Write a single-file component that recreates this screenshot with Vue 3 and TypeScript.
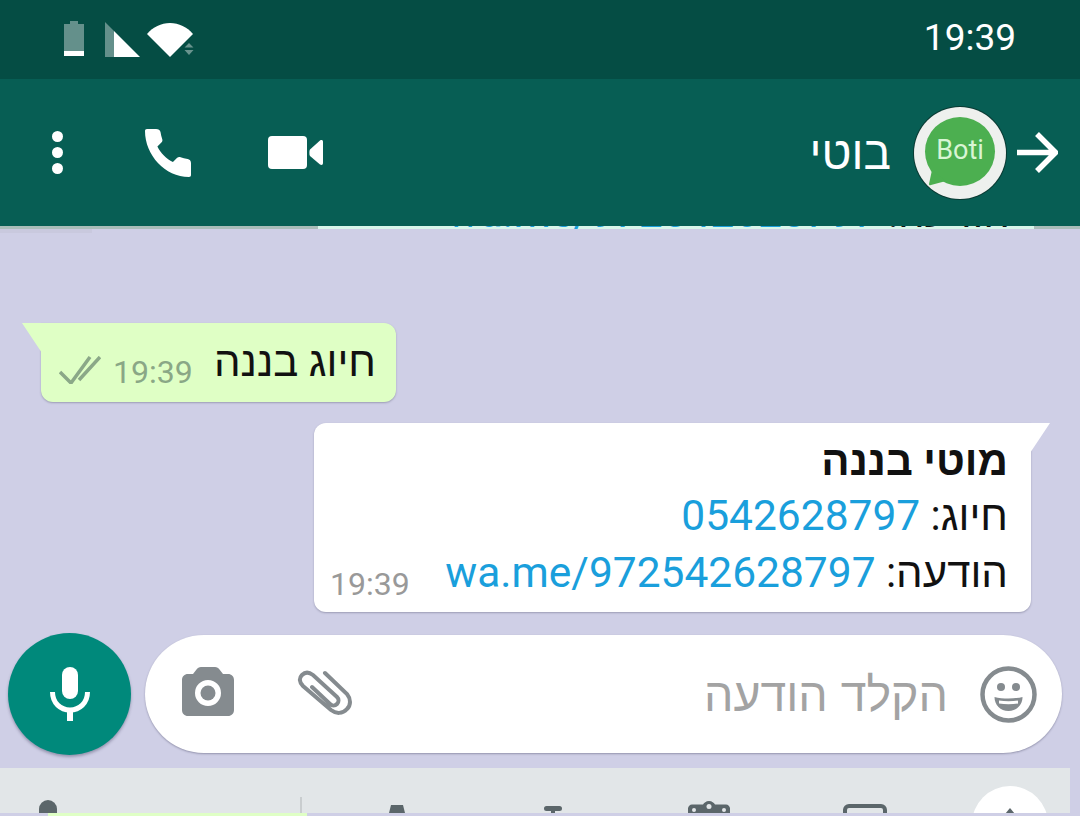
<template>
  <div class="screen">
    <header class="status-bar">
      <div class="status-icons">
        <svg class="battery" width="20" height="35" viewBox="0 0 20 35">
          <path d="M6 0h8v3h6v32H0V3h6z" fill="#fff" fill-opacity=".38" />
          <rect y="30" width="20" height="5" fill="#fff" />
        </svg>
        <svg class="signal" width="35" height="35" viewBox="0 0 35 35">
          <path d="M0 0l9 9v26H0z" fill="#fff" fill-opacity=".38" />
          <path d="M9 9l26 26H9z" fill="#fff" />
        </svg>
        <svg class="wifi" width="48" height="36" viewBox="0 0 48 36">
          <path d="M0 12C6 5 14 1 23 1s17 4 23 11L23 35z" fill="#fff" />
          <path d="M42 21l4.500 4.500h-9zM37.500 28h9L42 33z" fill="#fff" fill-opacity=".4" />
        </svg>
      </div>
      <span class="clock">19:39</span>
    </header>

    <div class="app-bar">
      <div class="actions">
        <svg class="dots" width="11" height="43" viewBox="0 0 11 43">
          <circle cx="5.500" cy="5.500" r="5.500" fill="#fff" />
          <circle cx="5.500" cy="21.500" r="5.500" fill="#fff" />
          <circle cx="5.500" cy="37.500" r="5.500" fill="#fff" />
        </svg>
        <svg class="phone" width="48" height="48" viewBox="0 0 48 48">
          <path d="M2 0h9c2.500 0 4 1 4.500 3 .4 2.500 1 5 1.700 7 .5 1.500.2 2.600-.8 3.600l-4 4c3.200 6.500 9 12.400 15.500 15.500l4-4c1-1 2.300-1.400 3.700-.9 2 .7 4.400 1.300 7 1.700 2 .4 3.400 1.700 3.400 4V46c0 1.300-.7 2-2 2C20 48 0 26 0 2c0-1.300.7-2 2-2z" fill="#fff" />
        </svg>
        <svg class="video" width="55" height="33" viewBox="0 0 55 33">
          <rect width="39" height="33" rx="4" fill="#fff" />
          <path d="M42 13.500L52 4.500c1.500-1 3-.5 3 1.500v21c0 2-1.500 2.500-3 1.500L42 20c-.8-.8-.8-5.700 0-6.500z" fill="#fff" />
        </svg>
      </div>
      <div class="contact">
        <span class="contact-name" dir="rtl">בוטי</span>
        <div class="avatar">
          <div class="avatar-bubble">Boti</div>
          <svg class="avatar-tail" width="18" height="16" viewBox="0 0 18 16">
            <path d="M3 0L0 14 Q0 16 2 15 L17 11z" fill="#4caf50" />
          </svg>
        </div>
        <svg class="back" width="41" height="41" viewBox="0 0 41 41">
          <path d="M0 20.500h38M20 2l18.500 18.500L20 39" fill="none" stroke="#fff" stroke-width="5.500" />
        </svg>
      </div>
    </div>

    <main class="chat">
      <div class="scrolled-bubble" dir="rtl">
        <div class="scrolled-line">הודעה: <span class="link">wa.me/972542628797</span></div>
      </div>

      <div class="bubble outgoing">
        <span class="ticks-wrap">
          <svg width="42" height="28" viewBox="0 0 42 28">
            <path d="M1 16l11 11L31 1M20 24L41 1" fill="none" stroke="#8ba888" stroke-width="3.500" />
          </svg>
          <span class="time">19:39</span>
        </span>
        <span class="message" dir="rtl">{{ outgoingText }}</span>
      </div>

      <div class="bubble incoming">
        <div class="sender" dir="rtl">מוטי בננה</div>
        <div class="line" dir="rtl">חיוג: <span class="link">0542628797</span></div>
        <div class="last-row">
          <span class="time grey">19:39</span>
          <div class="line" dir="rtl">הודעה: <span class="link">wa.me/972542628797</span></div>
        </div>
      </div>

      <div class="composer">
        <button class="mic-btn">
          <svg width="40" height="54" viewBox="0 0 40 54">
            <rect x="12" y="0" width="16" height="32" rx="8" fill="#fff" />
            <path d="M2.500 25c0 11 8 18 17.500 18s17.500-7 17.500-18" fill="none" stroke="#fff" stroke-width="5" />
            <rect x="17" y="42" width="6" height="12" fill="#fff" />
          </svg>
        </button>
        <div class="input-pill">
          <svg class="camera" width="52" height="49" viewBox="0 0 52 49">
            <path fill-rule="evenodd" d="M19 0h14c2 0 3.500 1 4.500 2.500L41 7h5c3.500 0 6 2.500 6 6v30c0 3.500-2.500 6-6 6H6c-3.500 0-6-2.500-6-6V13c0-3.500 2.500-6 6-6h5l3.500-4.500C15.500 1 17 0 19 0zM26 13a13 13 0 1 0 0 26 13 13 0 0 0 0-26z" fill="#858b8f" />
            <circle cx="26" cy="26" r="7.500" fill="#858b8f" />
          </svg>
          <svg class="clip" width="55" height="49" viewBox="0 0 55 49">
            <path d="M28 3L50 24c4 5 4 11 0 15-4.500 5-11 5-16 1L6 16C2 12 2 8 5 5c3-3 7-3 11 0l24 22c2 2 2 5 0 7s-5 2-7 0L15 17" fill="none" stroke="#858b8f" stroke-width="4" stroke-linecap="round" />
          </svg>
          <span class="placeholder" dir="rtl">הקלד הודעה</span>
          <svg class="emoji" width="57" height="57" viewBox="0 0 57 57">
            <circle cx="28.500" cy="28.500" r="26" fill="none" stroke="#858b8f" stroke-width="4.500" />
            <circle cx="21" cy="21" r="4" fill="#858b8f" />
            <circle cx="36" cy="21" r="4" fill="#858b8f" />
            <path d="M14.500 31c8 2 20 2 28 0 0 8-6 14-14 14s-14-6-14-14zM19 34.500c6 1 13 1 19 0v3c-6 1-13 1-19 0z" fill="#858b8f" fill-rule="evenodd" />
          </svg>
        </div>
      </div>
    </main>

    <div class="keyboard-row">
      <div class="keyboard">
        <div class="key key-mic"><span class="mic-top"></span></div>
        <span class="key-divider"></span>
        <div class="key key-sticker">
          <svg width="32" height="10" viewBox="0 0 32 10">
            <path d="M10 0h12l2 8h6l2 2H0l2-2h6z" fill="#5b666a" />
          </svg>
        </div>
        <div class="key key-text">
          <svg width="18" height="10" viewBox="0 0 18 10">
            <path d="M2.500 0h13a2.500 2.500 0 0 1 0 5H11v5H7V5H2.500a2.500 2.500 0 0 1 0-5z" fill="#5b666a" />
          </svg>
        </div>
        <div class="key key-clip">
          <svg width="42" height="14" viewBox="0 0 42 14">
            <path d="M21 0c3 0 5 2 6 3.500h11c2 0 4 2 4 4V14H0V7.500c0-2 2-4 4-4h11C16 2 18 0 21 0z" fill="#5b666a" />
            <circle cx="21" cy="5.500" r="2.500" fill="#e2e6e8" />
            <circle cx="6" cy="9" r="2" fill="#e2e6e8" />
            <circle cx="36" cy="9" r="2" fill="#e2e6e8" />
          </svg>
        </div>
        <div class="key key-board"><span class="board-top"></span></div>
        <div class="key-circle"><span class="caret"></span></div>
      </div>
    </div>
    <div class="page-edge"><span class="edge-green"></span></div>
  </div>
</template>

<script setup lang="ts">
const outgoingText = 'חיוג בננה'
</script>

<style>
html,
body {
  margin: 0;
  background: #cfcfe6;
}
</style>

<style scoped>
.screen {
  width: 1080px;
  height: 816px;
  display: flex;
  flex-direction: column;
  overflow: hidden;
  background: #cfcfe6;
  font-family: Roboto, "Liberation Sans", sans-serif;
}

.status-bar {
  height: 79px;
  flex: none;
  background: #054d44;
  display: flex;
  align-items: flex-start;
  justify-content: space-between;
  color: #fff;
}

.status-icons {
  display: flex;
  align-items: flex-start;
  padding: 21px 0 0 64px;
}

.signal {
  margin: 1px 0 0 21px;
}

.wifi {
  margin: 1px 0 0 7px;
}

.clock {
  font-size: 37px;
  line-height: 42px;
  margin: 17px 64px 0 0;
}

.app-bar {
  height: 147px;
  flex: none;
  background: #075e54;
  display: flex;
  align-items: center;
  justify-content: space-between;
  color: #fff;
}

.actions {
  display: flex;
  align-items: center;
  padding-left: 52px;
}

.phone {
  margin-left: 82px;
}

.video {
  margin-left: 75px;
}

.contact {
  display: flex;
  align-items: center;
  padding-right: 22px;
}

.contact-name {
  font-size: 46px;
  line-height: 50px;
  margin-right: 23px;
}

.avatar {
  position: relative;
  width: 92px;
  height: 92px;
  box-sizing: border-box;
  padding-top: 10px;
  border-radius: 50%;
  background: #eef0ee;
  box-shadow: 0 0 0 1px #0a3a33;
  display: flex;
  justify-content: center;
  margin-right: 11px;
}

.avatar-bubble {
  width: 70px;
  height: 69px;
  border-radius: 50%;
  background: #4caf50;
  color: #d9f5d4;
  font-size: 27px;
  line-height: 66px;
  text-align: center;
}

.avatar-tail {
  position: absolute;
  left: 15px;
  bottom: 13px;
}

.chat {
  flex: none;
  height: 529px;
  display: flex;
  flex-direction: column;
  align-items: flex-start;
  background: linear-gradient(#c9c9de, #c9c9de) 0 3px / 92px 4px no-repeat;
}

.scrolled-bubble {
  flex: none;
  align-self: stretch;
  height: 3px;
  padding: 0 70px 0 0;
  overflow: hidden;
  background: linear-gradient(to right, #a9bdb9 0 318px, #d8f5ea 318px 1034px, #a9bdb9 1034px);
  color: #111;
  font-size: 42px;
}

.scrolled-line {
  line-height: 50px;
  margin-top: -38px;
}

.bubble {
  position: relative;
  flex: none;
  box-sizing: border-box;
  border-radius: 12px;
  box-shadow: 0 1px 2px rgba(60, 60, 90, 0.35);
}

.bubble::before {
  content: "";
  position: absolute;
  top: 0;
  width: 20px;
  height: 30px;
}

.outgoing {
  width: 355px;
  height: 79px;
  margin: 94px 0 0 41px;
  background: #dfffc5;
  border-top-left-radius: 0;
  display: flex;
  align-items: center;
  padding: 0 20px 0 18px;
  justify-content: space-between;
}

.outgoing::before {
  left: -19px;
  background: #dfffc5;
  clip-path: polygon(0 0, 100% 0, 100% 100%);
}

.ticks-wrap {
  display: flex;
  align-items: center;
  margin-top: 14px;
  gap: 12px;
}

.ticks-wrap .time {
  margin-top: 4px;
}

.message {
  font-size: 42px;
  line-height: 50px;
  color: #111;
  margin-top: -2px;
}

.time {
  font-size: 32px;
  line-height: 36px;
  color: #8aa786;
}

.time.grey {
  color: #999;
}

.incoming {
  width: 717px;
  height: 189px;
  margin: 21px 0 0 314px;
  background: #fff;
  border-top-right-radius: 0;
  padding: 11px 23px 0 16px;
  color: #111;
}

.incoming::before {
  right: -19px;
  background: #fff;
  clip-path: polygon(0 0, 100% 0, 0 100%);
}

.sender {
  font-size: 42px;
  font-weight: 700;
  line-height: 53px;
}

.line {
  font-size: 42px;
  line-height: 57px;
}

.link {
  font-size: 42.500px;
  color: #1a9fdc;
}

.last-row {
  display: flex;
  align-items: flex-end;
  justify-content: space-between;
}

.last-row .time {
  margin-bottom: -1px;
}

.composer {
  flex: none;
  display: flex;
  align-items: center;
  margin-top: 21px;
  padding-left: 8px;
  gap: 14px;
}

.mic-btn {
  width: 123px;
  height: 122px;
  flex: none;
  border: none;
  border-radius: 50%;
  padding: 0;
  background: #00897b;
  box-shadow: 0 2px 3px rgba(60, 60, 90, 0.4);
  display: flex;
  align-items: center;
  justify-content: center;
}

.input-pill {
  width: 917px;
  height: 118px;
  box-sizing: border-box;
  background: #fff;
  border-radius: 59px;
  box-shadow: 0 1px 2px rgba(60, 60, 90, 0.4);
  display: flex;
  align-items: center;
  padding: 0 25px 0 37px;
}

.camera {
  margin-bottom: 5px;
}

.clip {
  margin-left: 63px;
}

.placeholder {
  margin: 2px 0 0 auto;
  font-size: 46.500px;
  color: #a3a3a3;
  font-family: "Liberation Sans", sans-serif;
}

.emoji {
  margin-left: 32px;
}

.keyboard-row {
  height: 45px;
  flex: none;
  margin-top: 13px;
  overflow: hidden;
}

.keyboard {
  width: 1070px;
  height: 45px;
  background: #e2e6e8;
  display: flex;
  align-items: flex-start;
  position: relative;
}

.key {
  display: flex;
  justify-content: center;
}

.key-mic {
  width: 96px;
  padding-top: 32px;
}

.mic-top {
  width: 18px;
  height: 24px;
  border-radius: 9px;
  background: #5b666a;
}

.key-divider {
  width: 2px;
  height: 20px;
  margin: 29px 0 0 204px;
  background: #c9cdcf;
}

.key-sticker {
  width: 156px;
  margin-left: 17px;
  padding-top: 37px;
}

.key-text {
  width: 156px;
  padding-top: 38px;
}

.key-clip {
  width: 156px;
  padding-top: 33px;
}

.key-board {
  width: 156px;
  padding-top: 36px;
}

.board-top {
  width: 44px;
  height: 20px;
  box-sizing: border-box;
  border: 4px solid #5b666a;
  border-radius: 6px;
}

.key-circle {
  position: absolute;
  left: 972px;
  top: 18px;
  width: 76px;
  height: 76px;
  border-radius: 50%;
  background: #fff;
  display: flex;
  justify-content: center;
}

.caret {
  width: 10px;
  height: 6px;
  margin-top: 22px;
  background: #5b666a;
  clip-path: polygon(50% 0, 100% 100%, 0 100%);
}

.page-edge {
  flex: 1;
  background: #cfcfe6;
  display: flex;
}

.edge-green {
  width: 259px;
  margin-left: 48px;
  background: #dfffc5;
}
</style>
